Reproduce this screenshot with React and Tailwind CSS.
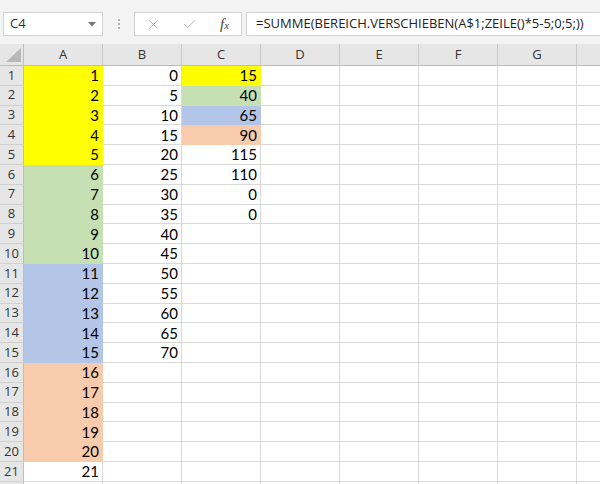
import React from 'react';
import { X, Check } from 'lucide-react';

const cols = ['A', 'B', 'C', 'D', 'E', 'F', 'G', ''];

const fills = {
  y: 'bg-[#ffff00] border-[#ffff00]',
  g: 'bg-[#c6e0b4] border-[#c6e0b4]',
  b: 'bg-[#b4c6e7] border-[#b4c6e7]',
  o: 'bg-[#f8cbad] border-[#f8cbad]',
};

const colA = (r) => (r <= 5 ? 'y' : r <= 10 ? 'g' : r <= 15 ? 'b' : r <= 20 ? 'o' : null);
const colC = ['y', 'g', 'b', 'o'];
const cValues = [15, 40, 65, 90, 115, 110, 0, 0];

const rows = Array.from({ length: 22 }, (_, i) => i + 1);

function cellFor(r, c) {
  if (c === 'A' && r <= 21) return { v: r, fill: colA(r) };
  if (c === 'B' && r <= 15) return { v: (r - 1) * 5 };
  if (c === 'C' && r <= 8) return { v: cValues[r - 1], fill: colC[r - 1] };
  return { v: '' };
}

export default function App() {
  return (
    <div className="w-[600px] h-[484px] overflow-hidden bg-white" style={{ fontFamily: '"Open Sans", sans-serif' }}>
      {/* formula bar */}
      <div className="h-[44px] bg-[#f3f3f3] flex items-start pt-3">
        <div className="ml-[3px] w-[100px] h-6 bg-white border border-[#d4d4d4] flex items-center justify-between pl-[6px] pr-[6px]">
          <span className="text-[13px] text-[#333]">C4</span>
          <svg width="8" height="5" viewBox="0 0 8 5"><polygon points="0,0 8,0 4,4.5" fill="#777" /></svg>
        </div>
        <div className="w-[31px] h-6 flex flex-col items-center justify-center gap-[2px]">
          <span className="w-[2px] h-[2px] bg-[#b0b0b0]" />
          <span className="w-[2px] h-[2px] bg-[#b0b0b0]" />
          <span className="w-[2px] h-[2px] bg-[#b0b0b0]" />
        </div>
        <div className="w-[108px] h-6 bg-white border border-[#d4d4d4] flex items-center">
          <X className="ml-[11px] w-[15px] h-[15px] text-[#b3b3b3]" strokeWidth={1.5} />
          <Check className="ml-[21px] w-[15px] h-[15px] text-[#b3b3b3]" strokeWidth={1.5} />
          <span className="ml-[23px] text-[15px] italic text-[#444] leading-none" style={{ fontFamily: '"Liberation Serif", serif' }}>
            f<span className="text-[11px]">x</span>
          </span>
        </div>
        <div className="ml-[4px] flex-1 h-6 bg-white border border-r-0 border-[#d4d4d4] flex items-center pl-[9px]">
          <span className="text-[13px] text-[#222] whitespace-nowrap">=SUMME(BEREICH.VERSCHIEBEN(A$1;ZEILE()*5-5;0;5;))</span>
        </div>
      </div>

      {/* column headers */}
      <div className="flex h-[22px] bg-[#e6e6e6] border-b border-[#bdbdbd]">
        <div className="w-[24px] shrink-0 border-r border-[#bdbdbd] flex items-end justify-end pr-[2px] pb-[3px]">
          <svg width="15" height="14" viewBox="0 0 15 14"><polygon points="15,0 15,14 0,14" fill="#b8b8b8" /></svg>
        </div>
        {cols.map((c, i) => (
          <div key={i} className="w-[79px] shrink-0 border-r border-[#c8c8c8] flex items-center justify-center text-[13px] text-[#333]">
            {c}
          </div>
        ))}
      </div>

      {/* grid rows */}
      {rows.map((r) => (
        <div key={r} className="flex h-[19.8px]">
          <div className="w-[24px] shrink-0 bg-[#e6e6e6] border-r border-b border-r-[#bdbdbd] border-b-[#d0d0d0] flex items-center justify-center text-[13px] text-[#333]">
            {r <= 21 ? r : ''}
          </div>
          {cols.map((c, i) => {
            const cell = cellFor(r, c);
            const fill = cell.fill ? fills[cell.fill] : 'bg-white border-[#d9d9d9]';
            return (
              <div
                key={i}
                className={`w-[79px] shrink-0 border-r border-b ${fill} flex items-center justify-end pr-[3px] text-[15px] text-black`}
                style={{ fontFamily: 'Lato, sans-serif' }}
              >
                {cell.v}
              </div>
            );
          })}
        </div>
      ))}
    </div>
  );
}
